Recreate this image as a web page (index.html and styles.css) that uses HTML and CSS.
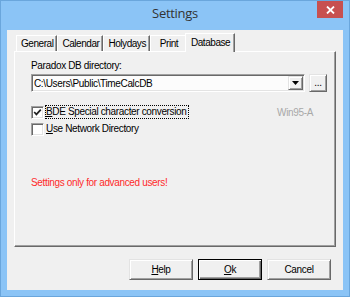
FILE: index.html
```html
<!DOCTYPE html>
<html lang="en">
<head>
  <meta charset="UTF-8">
  <title>Settings</title>
  <link rel="stylesheet" href="styles.css">
</head>
<body>

<!-- Settings dialog -->
<div class="window">
  <div class="titlebar">
    <span></span>
    <div class="title">Settings</div>
    <div class="close">
      <svg width="9" height="8" viewBox="0 0 9 8"><path d="M1 0.5 L8 7.5 M8 0.5 L1 7.5" stroke="#fff" stroke-width="1.8" fill="none"/></svg>
    </div>
  </div>

  <div class="client">
    <!-- Tabs -->
    <div class="tabs">
      <div class="tab">General</div>
      <div class="tab">Calendar</div>
      <div class="tab">Holydays</div>
      <div class="tab">Print</div>
      <div class="tab active">Database</div>
    </div>

    <div class="panel">
      <div class="label">Paradox DB directory:</div>
      <div class="path-row">
        <div class="combo">
          <span class="combo-text">C:\Users\Public\TimeCalcDB</span>
          <span class="drop"><svg width="7" height="4" viewBox="0 0 7 4"><polygon points="0,0 7,0 3.5,4" fill="#000"/></svg></span>
        </div>
        <div class="browse">...</div>
      </div>

      <div class="options">
        <div class="check-row">
          <div class="check">
            <span class="box"><svg width="9" height="9" viewBox="0 0 9 9"><polyline points="1.2,4 3.4,6.4 7.8,1.6" stroke="#222" stroke-width="1.7" fill="none"/></svg></span>
            <span class="focus"><u>B</u>DE Special character conversion</span>
          </div>
          <span class="version">Win95-A</span>
        </div>
        <div class="check-row">
          <div class="check">
            <span class="box"></span>
            <span class="plain"><u>U</u>se Network Directory</span>
          </div>
        </div>
      </div>

      <div class="warning">Settings only for advanced users!</div>
    </div>

    <!-- Dialog buttons -->
    <div class="buttons">
      <div class="btn"><u>H</u>elp</div>
      <div class="btn default"><u>O</u>k</div>
      <div class="btn">Cancel</div>
    </div>
  </div>
</div>

</body>
</html>
```

FILE: styles.css
```css
* { box-sizing: border-box; }
body { margin: 0; font-family: "Liberation Sans", Arial, sans-serif; font-size: 10px; line-height: 13px; letter-spacing: -0.35px; color: #000; }
u { text-decoration: underline; }

/* Window frame */
.window {
  width: 350px;
  height: 297px;
  background: #8bc4f6;
  border: 1px solid #6aa6dc;
  padding: 0 6px 6px;
}
.titlebar {
  height: 29px;
  display: grid;
  grid-template-columns: 1fr auto 1fr;
  align-items: start;
}
.title {
  font-family: "Open Sans", sans-serif;
  font-size: 13px;
  line-height: 16px;
  letter-spacing: -0.3px;
  padding-top: 4px;
  color: #333;
}
.close {
  justify-self: end;
  width: 26px;
  height: 17px;
  background: #c75050;
  display: flex;
  align-items: center;
  justify-content: center;
}

.client { height: 260px; background: #f0f0f0; padding: 3px 7px 0; }

/* Tabs */
.tabs { display: flex; align-items: flex-end; height: 18px; padding-left: 2px; }
.tab {
  height: 16px;
  min-width: 37px;
  padding: 0 3px 0 4px;
  line-height: 15px;
  letter-spacing: -0.45px;
  text-align: center;
  border-top: 1px solid #fff;
  border-left: 1px solid #fff;
  border-right: 1px solid #696969;
  box-shadow: inset -1px 0 #a0a0a0;
}
.tab.active {
  height: 19px;
  line-height: 17px;
  margin: 0 -2px -1px;
  padding: 0 4px 0 5px;
  background: #f0f0f0;
  position: relative;
  z-index: 1;
}

.panel {
  height: 196px;
  border: 1px solid;
  border-color: #fff #696969 #696969 #fff;
  box-shadow: inset -1px -1px #a0a0a0;
  padding: 7px 0 0 16px;
}

/* Directory row */
.path-row { display: flex; gap: 4px; margin-top: 2px; }
.combo {
  width: 274px;
  height: 18px;
  display: flex;
  align-items: center;
  padding: 1px;
  border: 1px solid;
  border-color: #a0a0a0 #fff #fff #a0a0a0;
  box-shadow: inset 1px 1px #696969, inset -1px -1px #e3e3e3;
  background: #fcfcfc;
}
.combo-text { flex: 1; padding-left: 1px; }
.drop, .browse, .btn {
  background: #f0f0f0;
  border: 1px solid;
  border-color: #e3e3e3 #696969 #696969 #e3e3e3;
  box-shadow: inset 1px 1px #fff, inset -1px -1px #a0a0a0;
}
.drop { width: 15px; height: 14px; display: flex; align-items: center; justify-content: center; }
.browse { width: 18px; height: 18px; text-align: center; line-height: 15px; }

/* Checkboxes */
.options { width: 282px; margin-top: 13px; }
.check-row { display: flex; justify-content: space-between; align-items: center; height: 14px; }
.check-row + .check-row { margin-top: 3px; }
.check { display: flex; align-items: center; }
.box {
  width: 13px;
  height: 13px;
  margin-right: 1px;
  display: flex;
  align-items: center;
  justify-content: center;
  background: #fff;
  border: 1px solid;
  border-color: #a0a0a0 #fff #fff #a0a0a0;
  box-shadow: inset 1px 1px #696969, inset -1px -1px #e3e3e3;
}
.focus { border: 1px dotted #000; padding-right: 1px; line-height: 12px; }
.plain { border: 1px solid transparent; line-height: 12px; }
.version { color: #a8a8a8; }

.warning { color: #ff2a2a; margin-top: 40px; }

/* Buttons */
.buttons { display: flex; justify-content: flex-end; gap: 5px; margin-top: 12px; padding-right: 5px; }
.btn { width: 64px; height: 21px; line-height: 19px; text-align: center; }
.btn.default {
  border-color: #000;
  box-shadow: inset 1px 1px #fff, inset -1px -1px #696969, inset -2px -2px #a0a0a0;
}
```
